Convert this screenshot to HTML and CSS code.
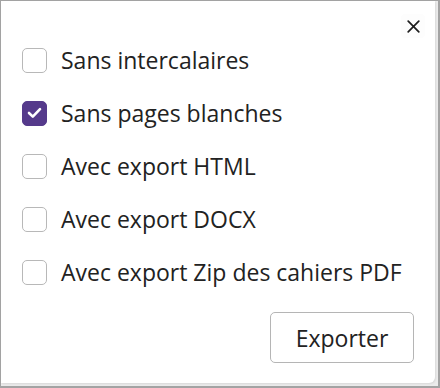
FILE: index.html
```html
<!DOCTYPE html>
<html lang="fr">
<head>
<meta charset="utf-8">
<title>Exporter</title>
<link rel="stylesheet" href="styles.css">
</head>
<body>
<div class="frame">
  <div class="dialog">
    <div class="header">
      <button class="close" aria-label="Fermer">
        <svg width="13" height="13" viewBox="0 0 13 13"><path d="M1.2 1.2 L11.8 11.8 M11.8 1.2 L1.2 11.8" stroke="#1e1e1e" stroke-width="1.7" fill="none" stroke-linecap="round"/></svg>
      </button>
    </div>
    <div class="options">
      <label class="opt"><span class="box"></span><span class="lbl">Sans intercalaires</span></label>
      <label class="opt"><span class="box checked"><svg width="15" height="12" viewBox="0 0 15 12"><path d="M2 6 L5.8 9.6 L13 2.2" stroke="#fff" stroke-width="2.6" fill="none" stroke-linecap="round" stroke-linejoin="round"/></svg></span><span class="lbl">Sans pages blanches</span></label>
      <label class="opt"><span class="box"></span><span class="lbl">Avec export HTML</span></label>
      <label class="opt"><span class="box"></span><span class="lbl">Avec export DOCX</span></label>
      <label class="opt"><span class="box"></span><span class="lbl">Avec export Zip des cahiers PDF</span></label>
    </div>
    <div class="footer">
      <button class="btn">Exporter</button>
    </div>
  </div>
</div>
</body>
</html>
```
FILE: styles.css
```css
html, body {
  margin: 0;
  padding: 0;
}
body {
  width: 440px;
  height: 388px;
  overflow: hidden;
  font-family: "Open Sans", "Noto Sans", sans-serif;
}
.frame {
  box-sizing: border-box;
  width: 440px;
  height: 388px;
  border-style: solid;
  border-color: #a3a3a3;
  border-width: 1px 2px 2px 1px;
  background: #ebebeb;
  padding: 0 3px 3px 0;
}
.dialog {
  box-sizing: border-box;
  height: 100%;
  background: #fff;
  border-radius: 0 0 6px 0;
  box-shadow: 1px 1px 2px rgba(0,0,0,0.08);
  padding: 0 21px 20px 21px;
  display: flex;
  flex-direction: column;
}
.header {
  height: 43px;
  box-sizing: border-box;
  padding-top: 13px;
  display: flex;
  justify-content: flex-end;
  margin-right: -11px;
}
.close {
  width: 24px;
  height: 24px;
  border: none;
  background: #fdfdfd;
  border-radius: 4px;
  padding: 0;
  display: flex;
  align-items: center;
  justify-content: center;
}
.options {
  display: flex;
  flex-direction: column;
  gap: 21px;
}
.opt {
  display: flex;
  align-items: center;
  height: 32px;
  gap: 14px;
}
.box {
  box-sizing: border-box;
  width: 25px;
  height: 25px;
  border: 1.5px solid #b8b8b8;
  border-radius: 5px;
  background: #fff;
  display: flex;
  align-items: center;
  justify-content: center;
  flex-shrink: 0;
}
.box.checked {
  background: #553a8b;
  border-color: #553a8b;
}
.lbl {
  font-size: 23px;
  line-height: 32px;
  color: #222;
}
.footer {
  margin-top: 24px;
  display: flex;
  justify-content: flex-end;
}
.btn {
  box-sizing: border-box;
  width: 144px;
  height: 51px;
  border: 1px solid #b5b5b5;
  border-radius: 5px;
  background: #fff;
  font-family: "Open Sans", "Noto Sans", sans-serif;
  font-size: 23px;
  color: #222;
  padding: 0;
}
```
